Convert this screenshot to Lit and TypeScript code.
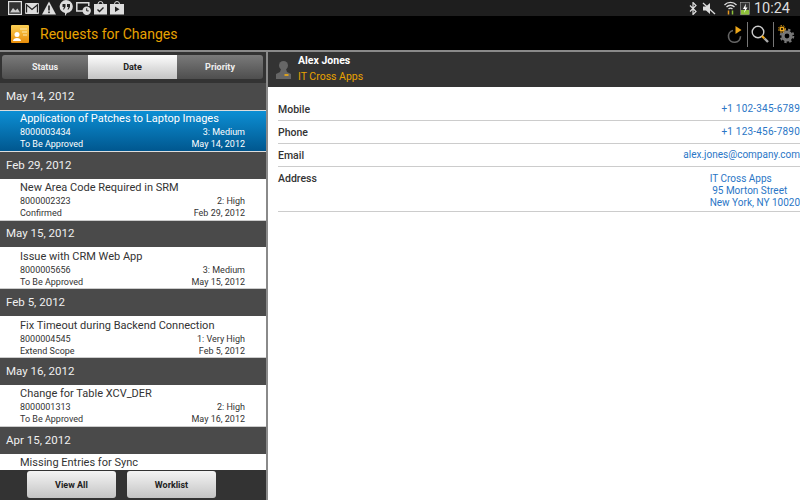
import { LitElement, html, css, svg } from "lit";
import { customElement } from "lit/decorators.js";

const groups = [
  { d: "May 14, 2012", t: "Application of Patches to Laptop Images", n: "8000003434", p: "3: Medium", s: "To Be Approved", sel: true },
  { d: "Feb 29, 2012", t: "New Area Code Required in SRM", n: "8000002323", p: "2: High", s: "Confirmed" },
  { d: "May 15, 2012", t: "Issue with CRM Web App", n: "8000005656", p: "3: Medium", s: "To Be Approved" },
  { d: "Feb 5, 2012", t: "Fix Timeout during Backend Connection", n: "8000004545", p: "1: Very High", s: "Extend Scope" },
  { d: "May 16, 2012", t: "Change for Table XCV_DER", n: "8000001313", p: "2: High", s: "To Be Approved" },
  { d: "Apr 15, 2012", t: "Missing Entries for Sync", n: "", p: "", s: "" },
];

const statusLeft = [
  svg`<svg width="14" height="14" viewBox="0 0 14 14"><rect x=".6" y=".6" width="12.800" height="12.800" fill="#333" stroke="#e0e0e0" stroke-width="1.200"/><path d="M2 11.500L5 7l2.500 2.500L9.500 7.500 12 11.500z" fill="#ccc"/></svg>`,
  svg`<svg width="14" height="11" viewBox="0 0 14 11"><rect width="14" height="11" rx="1" fill="#ddd"/><path d="M1.500 9.500V1.800L7 6.500l5.500-4.700v7.700" fill="none" stroke="#222" stroke-width="1.300"/></svg>`,
  svg`<svg width="14" height="14" viewBox="0 0 14 14"><path d="M7 .5L14 13.500H0z" fill="#ddd"/><rect x="6.200" y="4.500" width="1.600" height="5" fill="#222"/><rect x="6.200" y="10.500" width="1.600" height="1.600" fill="#222"/></svg>`,
  svg`<svg width="14" height="16" viewBox="0 0 14 16"><path d="M7 0a7 6.600 0 0 1 1 13.100L6 16v-3A7 6.600 0 0 1 7 0z" fill="#ddd"/><path d="M3.500 4h3v3L5 9.500H4L5 7H3.500zM8 4h3v3L9.500 9.500h-1L9.500 7H8z" fill="#222"/></svg>`,
  svg`<svg width="15" height="13" viewBox="0 0 15 13"><path d="M7.500 9H.8V.8h12V4" fill="none" stroke="#ddd" stroke-width="1.500"/><circle cx="10.700" cy="8.700" r="4.200" fill="#ddd"/><path d="M10.700 6.300v2.600h2" fill="none" stroke="#222"/></svg>`,
  svg`<svg width="13" height="14" viewBox="0 0 13 14"><path d="M0 3h13v10.500H0z" fill="#ddd"/><path d="M4 3a2.500 2.500 0 0 1 5 0" fill="none" stroke="#ddd"/><path d="M3.500 8.500l2 2 4-4" fill="none" stroke="#222" stroke-width="1.400"/></svg>`,
  svg`<svg width="14" height="14" viewBox="0 0 14 14"><path d="M0 3h14v10.500H0z" fill="#ddd"/><path d="M4.500 3a2.500 2.500 0 0 1 5 0" fill="none" stroke="#ddd"/><path d="M5 5.500l4.500 2.700L5 11z" fill="#222"/></svg>`,
];

@customElement("app-root")
export class AppRoot extends LitElement {
  static styles = css`
    :host { display: block; width: 800px; height: 500px; overflow: hidden; background: #000; font-family: Roboto, "Liberation Sans", sans-serif; }
    .statusbar { height: 16px; background: #1e1e1e; display: flex; align-items: center; justify-content: space-between; color: #ddd; }
    .sl { display: flex; align-items: center; gap: 3px; padding-left: 8px; height: 16px; }
    .sr { display: flex; align-items: center; height: 16px; padding-right: 10px; }
    .s1 { margin-right: 5px; }
    .s2 { margin-right: 8px; }
    .s3 { margin-right: 3px; }
    .s4 { margin-right: 4px; }
    .time { font-size: 14.500px; white-space: nowrap; flex: none; }
    .titlebar { height: 34px; background: #000; display: flex; align-items: center; border-bottom: 2px solid #8a8a8a; padding-left: 11px; padding-right: 3px; box-sizing: content-box; height: 34px; margin-bottom: 0; }
    .logo { display: block; margin-top: 2px; }
    .title { color: #e8a200; font-size: 14px; margin-left: 11px; flex: 1; margin-top: 2px; }
    .actions { display: flex; align-items: center; height: 30px; margin-top: 2px; }
    .sep { width: 1px; height: 25px; background: #777; }
    .main { display: flex; height: 448px; }
    .left { width: 266px; background: #4a4a4a; position: relative; overflow: hidden; flex: none; }
    .divider { width: 2px; background: #8a8a8a; flex: none; }
    .tabsbar { height: 31px; padding: 3px 3px 0 2px; box-sizing: border-box; background: #333; }
    .tabs { display: flex; height: 24px; border-radius: 3px; overflow: hidden; font-size: 9px; font-weight: 700; }
    .tab { display: flex; align-items: center; justify-content: center; color: #eee; background: linear-gradient(#7a7a7a, #4e4e4e); }
    .tab.a { width: 86px; }
    .tab.b { width: 89px; color: #222; background: linear-gradient(#fdfdfd, #c4c4c4); }
    .tab.c { flex: 1; }
    .ghead { height: 26.800px; background: #4a4a4a; color: #f0f0f0; font-size: 11.500px; display: flex; align-items: center; padding-left: 6px; box-sizing: border-box; padding-bottom: 1px; }
    .item { height: 42px; background: #fff; padding: 1.500px 21px 0 20px; color: #333; box-sizing: border-box; border-bottom: 1px solid #ccc; }
    .item.sel { background: linear-gradient(#0d8fd4, #00578f); color: #fff; border-top: 1px solid #ddd; border-bottom: 1px solid #ddd; padding-top: .5px; }
    .ttl { font-size: 11px; line-height: 15px; white-space: nowrap; }
    .sub { display: flex; justify-content: space-between; font-size: 9px; line-height: 12px; }
    .bottom { position: absolute; left: 0; right: 0; bottom: 0; height: 30px; background: #333; display: flex; gap: 11px; padding-left: 27px; box-sizing: border-box; }
    .btn { width: 89px; height: 27px; margin-top: 1px; border-radius: 3px; background: linear-gradient(#f4f4f4, #c4c4c4); color: #222; font-size: 9px; font-weight: 700; display: flex; align-items: center; justify-content: center; }
    .right { flex: 1; background: #fff; }
    .chead { height: 35px; background: #333; display: flex; align-items: center; padding-left: 8px; gap: 7px; }
    .cname { color: #fff; font-size: 10.500px; font-weight: 700; line-height: 15px; margin-top: -2px; }
    .corg { color: #e8a200; font-size: 10.500px; line-height: 17px; }
    .rows { padding: 11px 0 0 10px; }
    .row { display: flex; justify-content: space-between; border-bottom: 1px solid #ccc; height: 22px; }
    .lbl { color: #333; font-weight: 500; line-height: 24px; font-size: 10.500px; }
    .val { color: #2a76c6; font-size: 10px; line-height: 22px; }
    .ph { letter-spacing: .2px; }
    .addr { height: 44px; }
    .addrv { color: #2a76c6; font-size: 10px; line-height: 12px; padding-top: 5.500px; white-space: pre; }
  `;
  render() {
    return html`
      <div class="statusbar">
        <div class="sl">${statusLeft}</div>
        <div class="sr">
          <svg class="s1" width="8" height="13" viewBox="0 0 8 13"><path d="M1 3.500l6 6-3 3V.5l3 3-6 6" fill="none" stroke="#ddd" stroke-width="1.200"/></svg>
          <svg class="s2" width="14" height="13" viewBox="0 0 14 13"><path d="M1 4.500h3L8 1v11L4 8.500H1z" fill="#ddd"/><path d="M1 1l12 11" stroke="#ddd" stroke-width="1.300"/></svg>
          <svg class="s3" width="13" height="14" viewBox="0 0 13 14"><path d="M.5 4a8 8 0 0 1 12 0M2.500 6a5.500 5.500 0 0 1 8 0M4.500 8a3 3 0 0 1 4 0" fill="none" stroke="#ddd" stroke-width="1.300"/><path d="M4.500 9.500v4" stroke="#e89a20" stroke-width="1.500"/><path d="M8.500 9.500v4" stroke="#8fc23a" stroke-width="1.500"/></svg>
          <svg class="s4" width="10" height="14" viewBox="0 0 10 14"><rect x=".5" y="1.500" width="9" height="12" fill="#333" stroke="#aaa" stroke-width=".6"/><rect x="1" y="9" width="8" height="4.500" fill="#8fc23a"/><path d="M6 2.500L3 8h2l-1 4 3.500-5.500H5.500z" fill="#fff"/></svg>
          <span class="time">10:24</span>
        </div>
      </div>
      <div class="titlebar">
        <svg class="logo" width="18" height="18" viewBox="0 0 18 18"><defs><linearGradient id="lg" x1="0" y1="0" x2="0" y2="1"><stop offset="0" stop-color="#fbcf55"/><stop offset="1" stop-color="#e88d0a"/></linearGradient></defs><rect width="18" height="18" rx="1" fill="url(#lg)"/><circle cx="6" cy="9.500" r="2.500" fill="#fff"/><path d="M2 16c0-4 8-4 8 0z" fill="#fff"/><path d="M9 4h7M11 7h5M12 10h4" stroke="#fde9b0" stroke-width="1"/></svg>
        <span class="title">Requests for Changes</span>
        <div class="actions">
          <svg width="20" height="24" viewBox="0 0 20 24"><path d="M7 8.500a6 6 0 1 0 7.500 5.800" fill="none" stroke="#666" stroke-width="1.600"/><path d="M9.500 6l6 4-6 4z" fill="#eda71a" transform="translate(0 -2)"/></svg>
          <div class="sep" style="margin-left:1px"></div>
          <svg width="25" height="24" viewBox="0 0 25 24"><circle cx="10" cy="10" r="5.800" fill="none" stroke="#ccc" stroke-width="1.400"/><path d="M14 14l2.500 2.500" stroke="#eda71a" stroke-width="2.200"/><path d="M16.500 16.500l3.500 3.500" stroke="#aaa" stroke-width="2.400"/></svg>
          <div class="sep"></div>
          <svg width="23" height="24" viewBox="0 0 23 24"><circle cx="13" cy="14" r="4" fill="none" stroke="#777" stroke-width="3.200"/><circle cx="13" cy="14" r="6.300" fill="none" stroke="#777" stroke-width="2" stroke-dasharray="2.400 2.600"/><circle cx="8" cy="7" r="1.800" fill="none" stroke="#eda71a" stroke-width="1.500"/><circle cx="8" cy="7" r="3.400" fill="none" stroke="#eda71a" stroke-width="1" stroke-dasharray="1.500 1.300"/></svg>
        </div>
      </div>
      <div class="main">
        <div class="left">
          <div class="tabsbar"><div class="tabs"><div class="tab a">Status</div><div class="tab b">Date</div><div class="tab c">Priority</div></div></div>
          ${groups.map(
            (g) => html`
              <div class="ghead">${g.d}</div>
              <div class="item ${g.sel ? "sel" : ""}">
                <div class="ttl">${g.t}</div>
                <div class="sub"><span>${g.n}</span><span>${g.p}</span></div>
                <div class="sub"><span>${g.s}</span><span>${g.n ? g.d : ""}</span></div>
              </div>
            `
          )}
          <div class="bottom"><div class="btn">View All</div><div class="btn">Worklist</div></div>
        </div>
        <div class="divider"></div>
        <div class="right">
          <div class="chead">
            <svg width="15" height="20" viewBox="0 0 15 20"><circle cx="7.500" cy="5.500" r="4.500" fill="#666"/><path d="M5 9h5l1 3 4 2v5H0v-5l4-2z" fill="#666"/><rect x="8.500" y="14" width="4" height="2" fill="#d9a020"/></svg>
            <div><div class="cname">Alex Jones</div><div class="corg">IT Cross Apps</div></div>
          </div>
          <div class="rows">
            <div class="row"><span class="lbl">Mobile</span><span class="val ph">+1 102-345-6789</span></div>
            <div class="row"><span class="lbl">Phone</span><span class="val ph">+1 123-456-7890</span></div>
            <div class="row"><span class="lbl">Email</span><span class="val">alex.jones@company.com</span></div>
            <div class="row addr"><span class="lbl">Address</span><span class="addrv">IT Cross Apps
 95 Morton Street
New York, NY 10020</span></div>
          </div>
        </div>
      </div>
    `;
  }
}
